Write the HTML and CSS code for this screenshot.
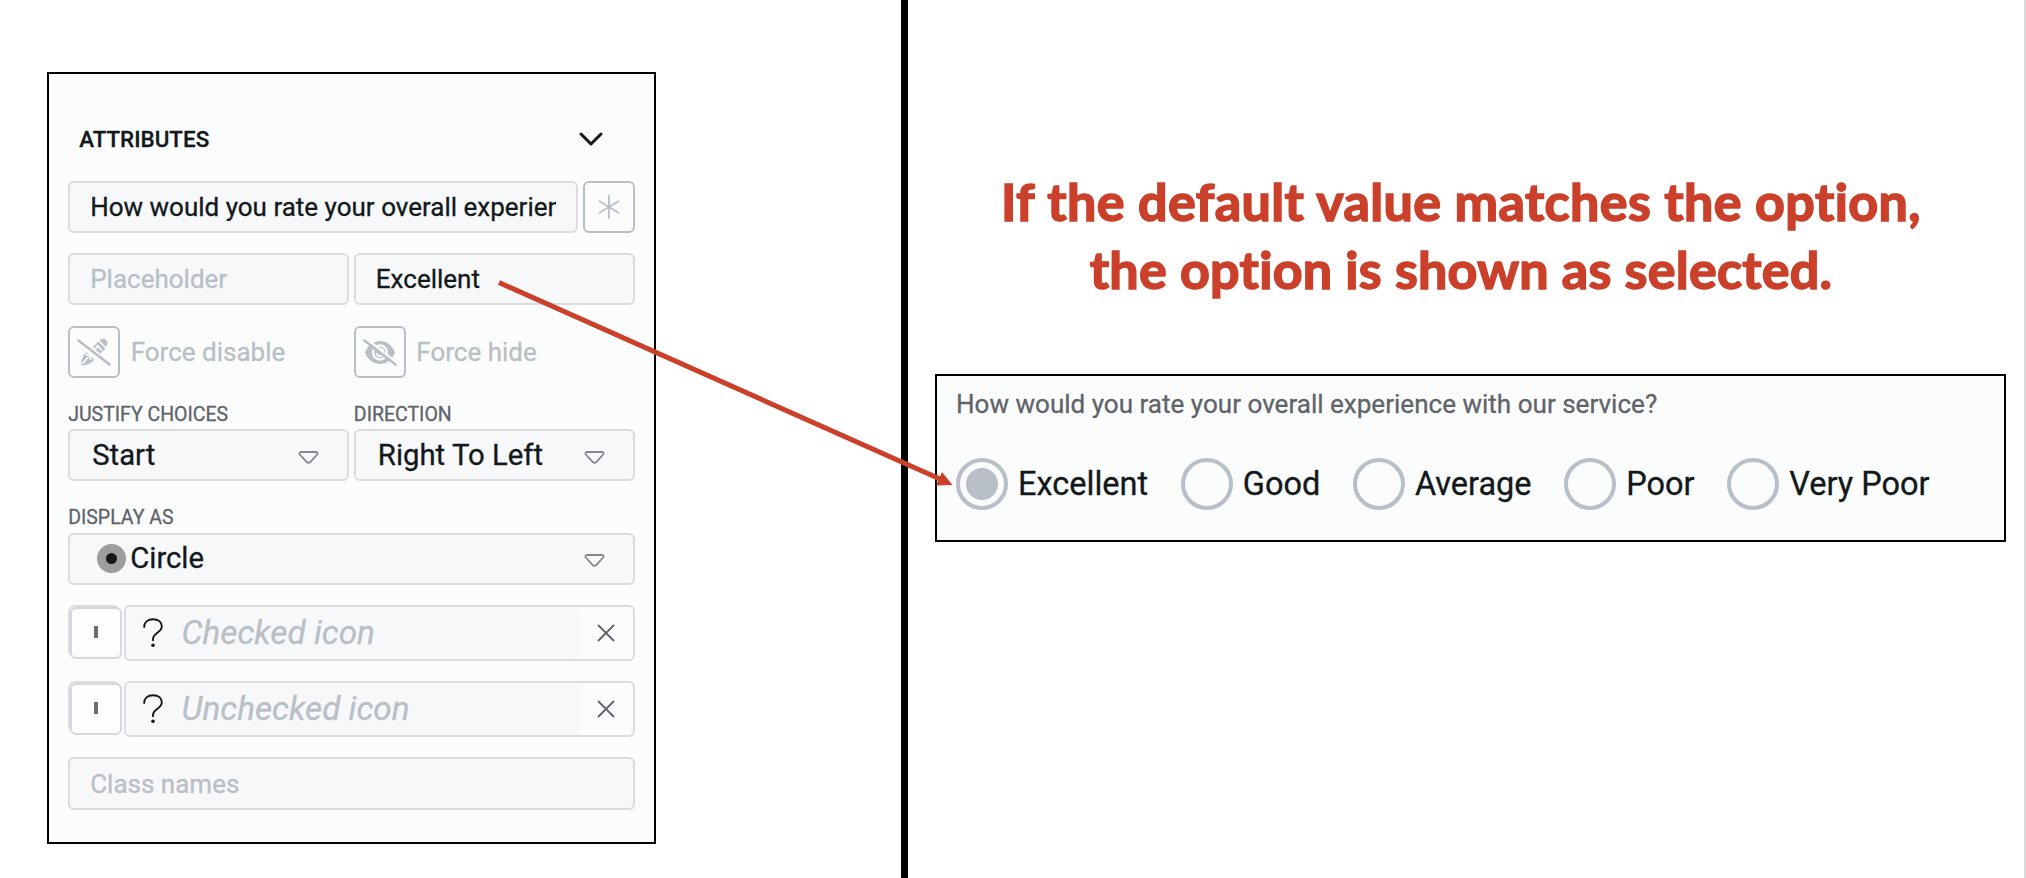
FILE: index.html
```
<!DOCTYPE html>
<html lang="en">
<head>
<meta charset="utf-8">
<title>Default value</title>
<link rel="stylesheet" href="styles.css">
</head>
<body>
<main class="slide">
  <section class="left">
    <div class="panel">
      <header class="panel-head">
        <h2 class="title">ATTRIBUTES</h2>
        <svg class="chevron" width="24" height="14" viewBox="0 0 24 14"><path d="M2 2l10 10L22 2"/></svg>
      </header>
      <div class="row">
        <div class="field grow"><span class="clip">How would you rate your overall experience</span></div>
        <div class="icon-btn">
          <svg width="22" height="24" viewBox="0 0 22 24" class="thin"><path d="M11 1v22M1.500 6.200l19 11.600M20.500 6.200l-19 11.600"/></svg>
        </div>
      </div>
      <div class="row">
        <div class="field grow muted">Placeholder</div>
        <div class="field grow">Excellent</div>
      </div>
      <div class="row">
        <div class="toggle">
          <div class="icon-btn">
            <svg width="34" height="28" viewBox="0 0 34 28">
              <g class="solid"><path d="M16 9l5.500-5.600 7 7L23 16z"/><path d="M22.500 2.600c2-2.300 5-2.300 6.800-.4s1.600 4.600-.4 6.600z"/><path d="M9.500 14l7.500 8c-2.500 3.700-7 5-13 5.500C4.300 21.500 6 17 9.500 14z"/></g>
              <path class="gap" d="M5 26l6-6.500M8.500 16l4 2 1.500 4M20 7l5 5.500M18 11l3-3"/>
              <path class="slash-gap" d="M3 1.500l32 25"/>
              <path class="slash" d="M1.500 2.500l31 24"/>
            </svg>
          </div>
          <span>Force disable</span>
        </div>
        <div class="toggle">
          <div class="icon-btn">
            <svg width="34" height="28" viewBox="0 0 34 28">
              <path class="solid" d="M2 14.500C5 7 10.500 3 17 3s12 4 15 11.500C29 22 23.500 26 17 26S5 22 2 14.500z"/>
              <circle class="iris" cx="17" cy="14.500" r="7"/>
              <path class="pupil" d="M17 11a3.500 3.500 0 1 1-3.400 4.300"/>
              <path class="slash-gap" d="M3 .5l32 25"/>
              <path class="slash" d="M1.500 2.500l31 24"/>
            </svg>
          </div>
          <span>Force hide</span>
        </div>
      </div>
      <div class="row labelled">
        <div class="group">
          <label class="label">JUSTIFY CHOICES</label>
          <div class="field select">Start<svg class="caret" width="21" height="13" viewBox="0 0 21 13"><path d="M2.500 1h16q1.800.8.700 2.500L12 11.300q-1.500 1-3 0L1.800 3.500Q.7 1.800 2.500 1z"/></svg></div>
        </div>
        <div class="group">
          <label class="label">DIRECTION</label>
          <div class="field select">Right To Left<svg class="caret" width="21" height="13" viewBox="0 0 21 13"><path d="M2.500 1h16q1.800.8.700 2.500L12 11.300q-1.500 1-3 0L1.800 3.500Q.7 1.800 2.500 1z"/></svg></div>
        </div>
      </div>
      <div class="row labelled">
        <div class="group">
          <label class="label">DISPLAY AS</label>
          <div class="field select display"><i class="dot"></i>Circle<svg class="caret" width="21" height="13" viewBox="0 0 21 13"><path d="M2.500 1h16q1.800.8.700 2.500L12 11.300q-1.500 1-3 0L1.800 3.500Q.7 1.800 2.500 1z"/></svg></div>
        </div>
      </div>
      <div class="row tight">
        <div class="swatch"><div class="swatch-in"><i class="bar"></i></div></div>
        <div class="picker">
          <div class="picker-main">
            <svg class="question" width="20" height="30" viewBox="0 0 20 30"><path d="M1.200 9C1.200 4.300 4.500 1.200 10 1.200S18.800 4.300 18.800 8.500c0 6-8.800 6.500-8.800 12.500v1.200"/><circle cx="10" cy="27.300" r="1.800"/></svg>
            <span class="hint">Checked icon</span>
          </div>
          <svg class="close" width="18" height="18" viewBox="0 0 18 18"><path d="M1 1l16 16M17 1L1 17"/></svg>
        </div>
      </div>
      <div class="row tight">
        <div class="swatch"><div class="swatch-in"><i class="bar"></i></div></div>
        <div class="picker">
          <div class="picker-main">
            <svg class="question" width="20" height="30" viewBox="0 0 20 30"><path d="M1.200 9C1.200 4.300 4.500 1.200 10 1.200S18.800 4.300 18.800 8.500c0 6-8.800 6.500-8.800 12.500v1.200"/><circle cx="10" cy="27.300" r="1.800"/></svg>
            <span class="hint">Unchecked icon</span>
          </div>
          <svg class="close" width="18" height="18" viewBox="0 0 18 18"><path d="M1 1l16 16M17 1L1 17"/></svg>
        </div>
      </div>
      <div class="row">
        <div class="field last muted">Class names</div>
      </div>
    </div>
  </section>
  <section class="right">
    <h1 class="headline"><span class="line-a">If the default value matches the option,</span><br><span class="line-b">the option is shown as selected.</span></h1>
    <div class="preview">
      <p class="question-text">How would you rate your overall experience with our service?</p>
      <div class="options">
        <div class="option"><i class="radio on"></i><span>Excellent</span></div>
        <div class="option"><i class="radio"></i><span>Good</span></div>
        <div class="option"><i class="radio"></i><span>Average</span></div>
        <div class="option"><i class="radio"></i><span>Poor</span></div>
        <div class="option"><i class="radio"></i><span>Very Poor</span></div>
      </div>
    </div>
  </section>
  <svg class="arrow" width="2026" height="878" viewBox="0 0 2026 878"><path class="shaft" d="M499 282.500L940 479"/><path class="tip" d="M952.500 485l-16.500.5 6-13.500z"/></svg>
</main>
</body>
</html>
```
FILE: styles.css
```
* { box-sizing: border-box; }
body { margin: 0; background: #fff; font-family: Roboto, "Liberation Sans", sans-serif; color: #13181b; -webkit-text-stroke: 0.3px; }
.slide { position: relative; display: flex; width: 2026px; height: 878px; overflow: hidden; border-right: 2px solid #d9d9d9; }
.left { width: 908px; height: 878px; padding: 72px 0 0 47px; border-right: 7px solid #000; flex: none; }
.panel { width: 608.500px; height: 772px; border: 2px solid #000; background: #fbfdfc; padding: 43px 19px 0 19.200px; }
.panel-head { display: flex; justify-content: space-between; align-items: center; height: 44px; margin-bottom: 20.300px; padding: 0 32px 0 11px; }
.title { margin: 0; font-size: 22.400px; font-weight: 500; line-height: 44px; }
.chevron { fill: none; stroke: #13181b; stroke-width: 3; stroke-linecap: round; stroke-linejoin: round; }
.row { display: flex; gap: 5px; margin-bottom: 20.150px; }
.field { height: 52px; flex: 1 1 0; min-width: 0; border: 2px solid #dadce1; border-radius: 6px; background: #f7f8fa; padding: 0 20px; font-size: 26px; line-height: 49px; white-space: nowrap; }
.last { height: 53px; line-height: 51px; }
.clip { display: block; overflow: hidden; }
.muted, .toggle { color: #b9bfc6; }
.icon-btn { width: 52px; height: 52px; flex: none; border: 2px solid #b9bfc6; border-radius: 6px; display: flex; align-items: center; justify-content: center; }
.thin { fill: none; stroke: #b9bfc6; stroke-width: 1.800; stroke-linecap: round; }
.toggle { flex: 1 1 0; display: flex; gap: 10.500px; font-size: 26px; line-height: 52px; white-space: nowrap; }
.solid { fill: #b9bfc6; }
.gap { fill: none; stroke: #fbfdfc; stroke-width: 1.800; }
.iris { fill: none; stroke: #fbfdfc; stroke-width: 2.400; }
.pupil { fill: none; stroke: #fbfdfc; stroke-width: 2; }
.slash { stroke: #b9bfc6; stroke-width: 2.600; stroke-linecap: round; }
.slash-gap { stroke: #fbfdfc; stroke-width: 2.400; }
.group { flex: 1 1 0; min-width: 0; }
.label { display: block; height: 31.500px; line-height: 33.500px; font-size: 19.500px; color: #5f636a; }
.select { display: flex; align-items: center; padding: 0 28px 0 22px; font-size: 29.300px; line-height: 48px; }
.display { line-height: 46px; padding-bottom: 1px; }
.caret { margin: 5px 0 0 auto; fill: none; stroke: #82888d; stroke-width: 1.800; stroke-linejoin: round; }
.dot { width: 29px; height: 29px; border-radius: 50%; border: 9px solid #9c9d9f; background: #13181b; margin: 0 4px 0 5px; }
.tight { gap: 4.300px; }
.swatch { width: 52px; height: 52px; border: 2px solid #dadce1; border-radius: 7px; flex: none; }
.swatch-in { width: 51.500px; height: 52px; border: 2px solid #d5d8dd; border-radius: 6px; background: #fcfdfd; display: flex; align-items: center; justify-content: center; padding-bottom: 3px; }
.bar { width: 4px; height: 12px; background: #6d6c6e; }
.picker { flex: 1; height: 56px; border: 2px solid #dadce1; border-radius: 6px; display: flex; align-items: center; padding-right: 18px; }
.picker-main { height: 52px; flex: 1; margin-right: 17px; border-radius: 6px; background: #f7f8fa; display: flex; align-items: center; padding-left: 17px; }
.question { fill: none; stroke: #13181b; stroke-width: 1.900; stroke-linecap: round; }
.question circle { fill: #13181b; stroke: none; }
.hint { margin-left: 18px; font-size: 33.300px; line-height: 52px; font-style: italic; color: #b9bfc6; overflow: hidden; }
.close { fill: none; stroke: #5f636a; stroke-width: 1.800; }
.right { flex: 1; padding: 167px 0 0 27px; }
.headline { margin: 0; width: 1052px; height: 207px; text-align: center; font-family: Lato, sans-serif; font-weight: 700; font-size: 52px; line-height: 68px; color: #cb402a; white-space: nowrap; font-variant-ligatures: none; -webkit-text-stroke: 1.600px #cb402a; }
.line-a { letter-spacing: .42px; }
.line-b { letter-spacing: .28px; }
.preview { width: 1071px; height: 168px; border: 2px solid #000; background: #fbfdfc; padding: 10px 19px; }
.question-text { margin: 0; font-size: 26.050px; line-height: 36px; color: #5f636a; }
.options { display: flex; gap: 32.600px; margin-top: 35px; }
.option { display: flex; gap: 10px; align-items: center; font-size: 32.500px; line-height: 52px; white-space: nowrap; }
.option span { padding-top: 1px; }
.radio { width: 52px; height: 52px; border: 4px solid #b9bfc6; border-radius: 50%; display: block; }
.on { background: radial-gradient(circle, #b9bfc6 15.500px, #fbfdfc 16.500px); }
.arrow { position: absolute; left: 0; top: 0; }
.shaft { stroke: #cb402a; stroke-width: 5; }
.tip { fill: #cb402a; }
```
